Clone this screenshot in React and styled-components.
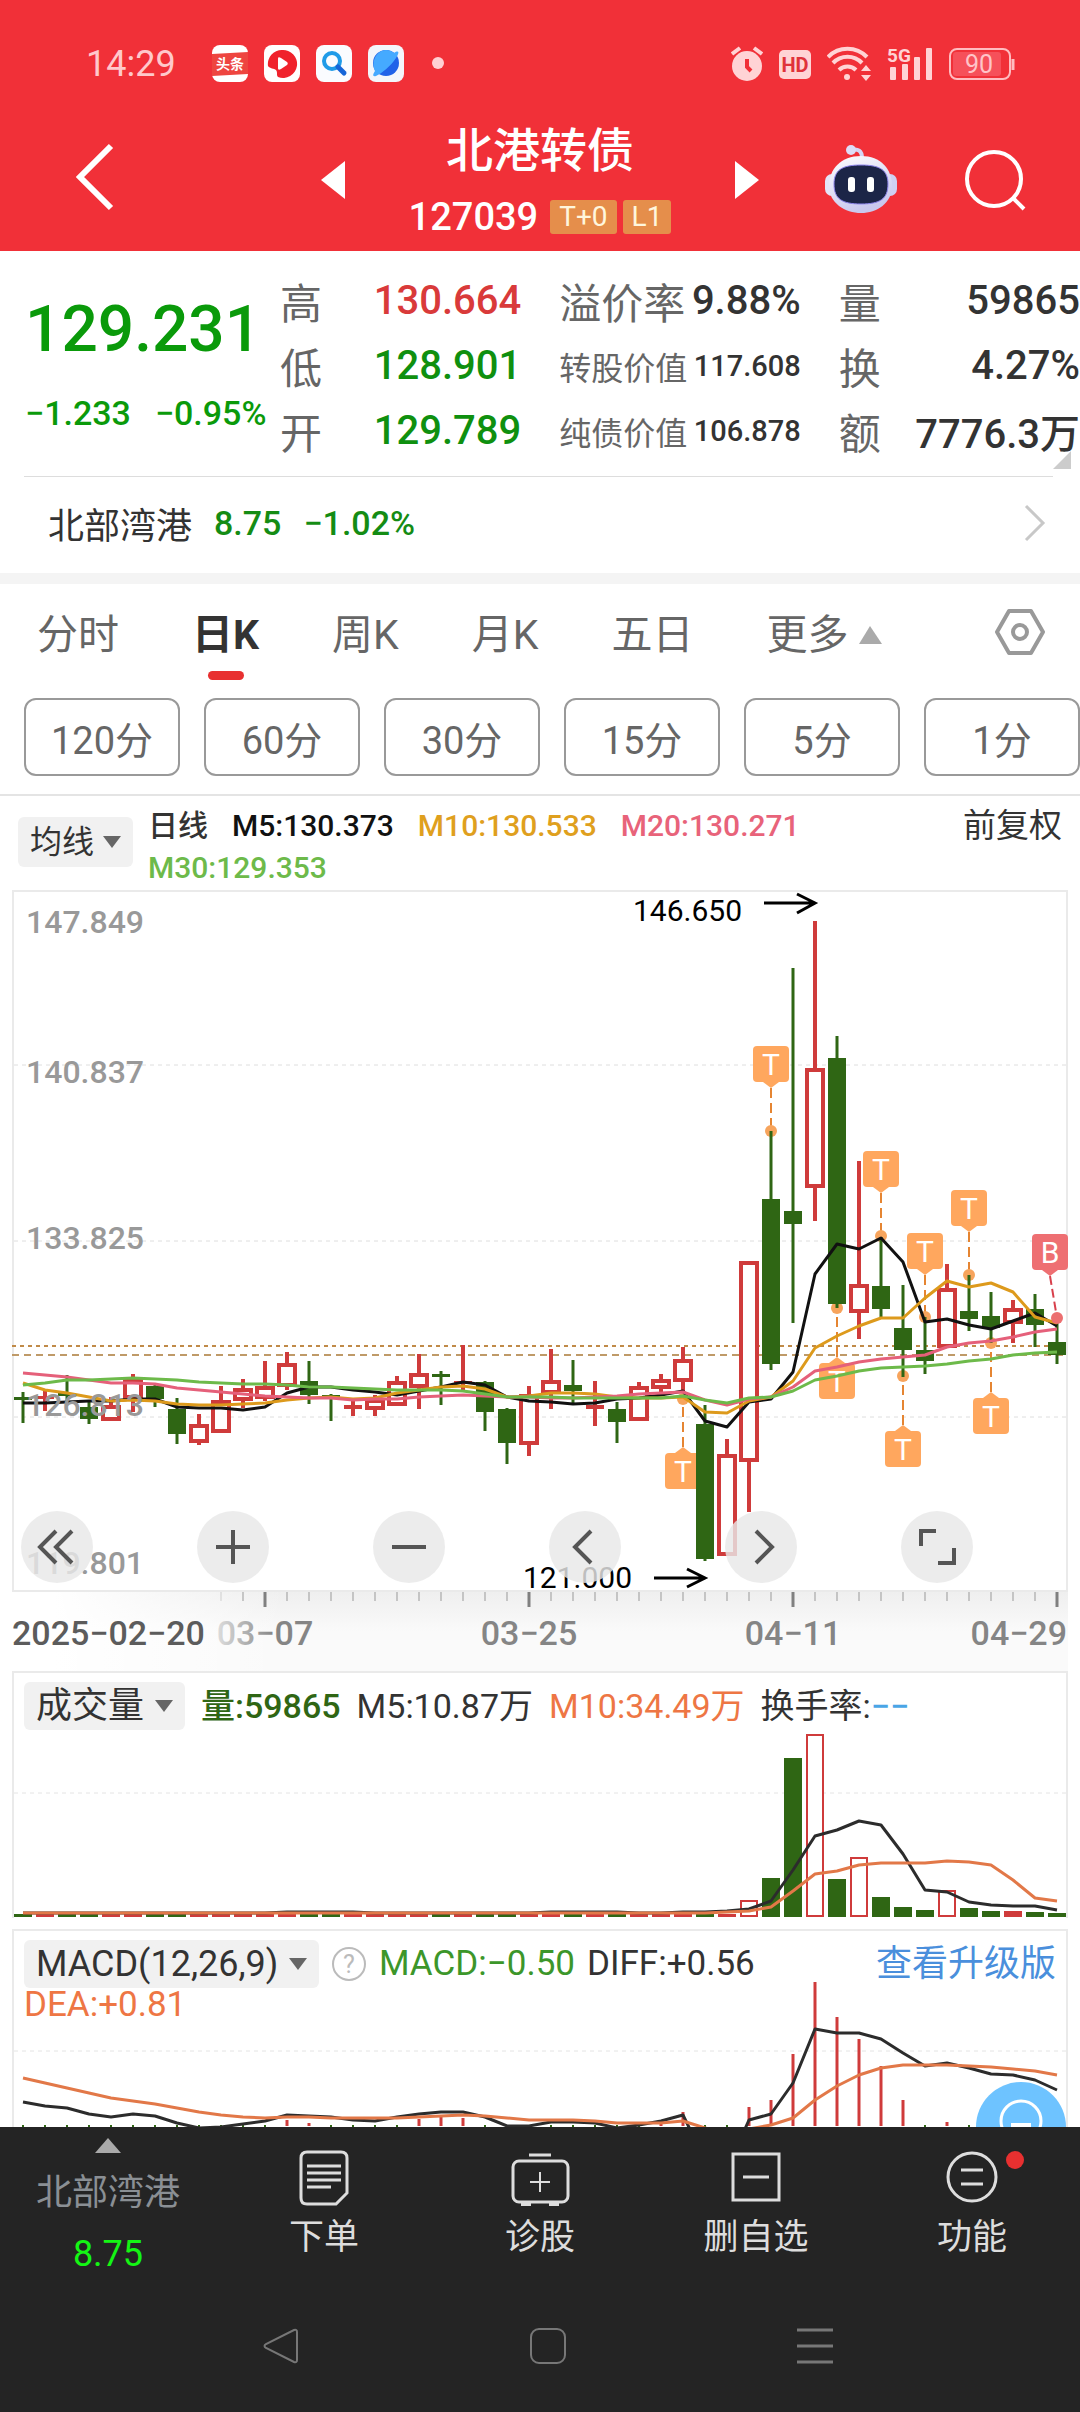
import React, { Component } from "react";

import styled, { createGlobalStyle } from "styled-components";

const GlobalStyle = createGlobalStyle`
  * {
    box-sizing: border-box;
  }
  body {
    margin: 0;
    background: #fff;
    color: #333;
    font-family: Roboto, "Noto Sans CJK SC", sans-serif;
  }
  button, select {
    font: inherit;
    color: inherit;
    background: none;
    border: 0;
    padding: 0;
    margin: 0;
  }
  a {
    color: inherit;
    text-decoration: none;
  }
  svg {
    display: block;
    flex-shrink: 0;
  }
  svg text {
    font-family: Roboto, "Noto Sans CJK SC", sans-serif;
  }
`

const RED = "#cf3b3b"
const GREEN = "#2f6614"
const ORANGE = "#e27848"

/* ---------- header ---------- */

const Header = styled.header`
  background: #f13038;
  color: #fff;
`
const StatusBar = styled.div`
  display: flex;
  justify-content: space-between;
  align-items: center;
  height: 92px;
  padding: 36px 64px 0 86px;
`
const StatusGroup = styled.div`
  display: flex;
  align-items: center;
  gap: 16px;
`
const Clock = styled.time`
  font-size: 36px;
  line-height: 44px;
  color: #ffc8cb;
  margin-right: 20px;
`
const TitleBar = styled.div`
  display: grid;
  grid-template-columns: 1fr 438px 1fr;
  align-items: center;
  padding: 29px 0 12px;
`
const BackButton = styled.button`
  margin-left: 76px;
  justify-self: start;
`
const TitleGroup = styled.div`
  display: flex;
  align-items: center;
  justify-content: space-between;
`
const Title = styled.h1`
  margin: 0;
  font-size: 47px;
  line-height: 60px;
  font-weight: 500;
  text-align: center;
`
const CodeRow = styled.div`
  display: flex;
  align-items: center;
  justify-content: center;
  gap: 6px;
  height: 44px;
  margin-top: 14px;
  font-size: 38px;
  font-weight: 500;
`
const Badge = styled.span`
  padding: 0 9px;
  margin-left: ${props => (props.$first ? "6px" : "0")};
  border-radius: 3px;
  background: #e58e4b;
  color: #fff6dd;
  font-size: 28px;
  line-height: 34px;
  font-weight: 400;
`
const HeaderActions = styled.div`
  display: flex;
  align-items: center;
  gap: 67px;
  padding-left: 65px;
`

/* ---------- quote ---------- */

const Quote = styled.section`
  display: flex;
  padding: 17px 0 13px;
`
const PriceBlock = styled.div`
  width: 280px;
  padding: 26px 0 0 25px;
  color: #0a9a0a;
  white-space: nowrap;
`
const Price = styled.div`
  font-size: 64px;
  line-height: 72px;
  font-weight: 500;
`
const Delta = styled.div`
  display: flex;
  gap: 24px;
  margin-top: 25px;
  font-size: 34px;
  line-height: 44px;
  font-weight: 500;
`
const Stats = styled.div`
  flex: 1;
  display: grid;
  grid-template-columns: repeat(3, 1fr);
  column-gap: 38px;
`
const StatColumn = styled.dl`
  margin: 0;
`
const Stat = styled.div`
  display: flex;
  align-items: center;
  justify-content: space-between;
  height: 65px;
  white-space: nowrap;
`
const StatLabel = styled.dt`
  font-size: ${props => (props.$small ? "32px" : "42px")};
  color: #666;
`
const StatValue = styled.dd`
  margin: 0;
  font-size: ${props => (props.$small ? "29px" : "40px")};
  font-weight: 500;
  color: ${props => props.$color || "#333"};
`
const Corner = styled.div`
  height: 1px;
  margin: 0 27px 0 24px;
  background: #ddd;
  position: relative;

  svg {
    position: absolute;
    right: -18px;
    bottom: 8px;
  }
`
const Related = styled.a`
  display: flex;
  align-items: center;
  height: 96px;
  padding: 0 34px 4px 48px;
  font-size: 36px;
`
const RelatedPrice = styled.span`
  margin-left: 22px;
  font-size: 34px;
  font-weight: 500;
  color: #148c14;
`
const RelatedArrow = styled.span`
  margin-left: auto;
`
const Band = styled.div`
  height: 11px;
  background: #f4f4f4;
`

/* ---------- tabs ---------- */

const Tabs = styled.nav`
  display: flex;
  gap: 73px;
  height: 96px;
  padding: 0 35px 0 37px;
`
const Tab = styled.button`
  display: flex;
  flex-direction: column;
  align-items: center;
  padding-top: 23px;
  font-size: 41px;
  line-height: 56px;
  white-space: nowrap;
  color: ${props => (props.$active ? "#333" : "#666")};
  font-weight: ${props => (props.$active ? 700 : 400)};

  &::after {
    content: "";
    width: 36px;
    height: 9px;
    margin-top: 8px;
    border-radius: 5px;
    background: ${props => (props.$active ? "#e83030" : "transparent")};
  }
`
const TabLabel = styled.span`
  display: flex;
  align-items: center;
  gap: 10px;
`
const SettingsButton = styled.button`
  margin-left: auto;
`
const Periods = styled.div`
  display: grid;
  grid-template-columns: repeat(6, 1fr);
  gap: 24px;
  padding: 18px 0 18px 24px;
  border-bottom: 2px solid #e4e4e4;
`
const Period = styled.button`
  height: 78px;
  border: 2px solid #999;
  border-radius: 12px;
  font-size: 38px;
  color: #666;
`

/* ---------- charts ---------- */

const Legend = styled.div`
  display: flex;
  align-items: flex-start;
  height: 94px;
  padding: 9px 18px 0;
  font-size: 33px;
  line-height: 42px;
`
const LegendItems = styled.div`
  flex: 1;
  display: flex;
  flex-wrap: wrap;
  column-gap: 24px;
  margin-left: 15px;
  font-size: 30px;
  font-weight: 500;
`
const Value = styled.span`
  color: ${props => props.$color};
  white-space: nowrap;
`
const Picker = styled.label`
  display: flex;
  align-items: center;
  gap: ${props => (props.$small ? "8px" : "10px")};
  flex-shrink: 0;
  height: ${props => (props.$small ? "50px" : "48px")};
  margin-top: ${props => (props.$small ? "12px" : "0")};
  padding: 0 12px;
  border-radius: 6px;
  background: #f1f1f1;

  select {
    appearance: none;
    outline: none;
    font-size: ${props => (props.$small ? "32px" : "36px")};
    line-height: 46px;
    color: #333;
  }
`
const ChartArea = styled.section`
  margin: 0 12px;
  position: relative;
`
const Canvas = styled.svg`
  width: 100%;
  height: auto;
  grid-area: 1 / 1;
`
const ChartButtons = styled.div`
  position: absolute;
  left: 9px;
  bottom: 9px;
  display: flex;
  gap: 104px;
`
const RoundButton = styled.button`
  width: 72px;
  height: 72px;
  border-radius: 50%;
  background: rgba(232, 232, 232, 0.82);
`
const DateAxis = styled.div`
  margin: 0 12px;
  background: linear-gradient(to right, #fff 4%, rgba(255, 255, 255, 0) 26%),
    linear-gradient(to bottom, #efefef, #fafafa 50%);
`
const Panel = styled.section`
  display: grid;
  margin: 0 12px ${props => (props.$last ? "0" : "11px")};
  position: relative;
  overflow: hidden;
`
const PanelHeader = styled.div`
  grid-area: 1 / 1;
  align-self: start;
  display: flex;
  flex-wrap: wrap;
  align-items: center;
  column-gap: ${props => props.$gap};
  padding: 11px 12px 0;
  font-size: ${props => props.$size};
  line-height: 34px;
  z-index: 1;
`
const Medium = styled.span`
  font-weight: ${props => props.$weight || 500};
  color: ${props => props.$color};
  white-space: nowrap;
`
const UpgradeLink = styled.a`
  margin-left: auto;
  font-size: 36px;
  color: #4a8fdc;
`
const ChatButton = styled.button`
  position: absolute;
  right: 2px;
  bottom: -45px;
  width: 90px;
  height: 90px;
  border-radius: 50%;
  background: #6ec3ff;
  z-index: 2;
`

/* ---------- bottom ---------- */

const BottomBar = styled.footer`
  background: #242424;
  color: #ddd;
`
const Actions = styled.div`
  display: grid;
  grid-template-columns: repeat(5, 1fr);
  height: 153px;
`
const Action = styled.button`
  display: flex;
  flex-direction: column;
  align-items: center;
  padding-top: 23px;
  font-size: 35px;
  line-height: 50px;
`
const ActionIcon = styled.span`
  position: relative;
  margin-bottom: 7px;
`
const Dot = styled.i`
  position: absolute;
  top: 1px;
  right: -26px;
  width: 18px;
  height: 18px;
  border-radius: 50%;
  background: #e83030;
`
const Ticker = styled(Action)`
  padding-top: 11px;
  color: #8a8f94;
  font-size: 36px;
  line-height: 46px;

  svg {
    margin-bottom: 17px;
  }
`
const TickerPrice = styled.span`
  margin-top: 15px;
  color: #14f514;
`
const SystemNav = styled.nav`
  display: flex;
  justify-content: center;
  align-items: center;
  gap: 231px;
  height: 132px;
  padding-left: 16px;
`

/* ---------- data, y grows downwards in chart units ---------- */

const STEP = 22
const xAt = i => 11 + i * STEP

// [up, high, body top, body bottom, low]
const candles = [
  [0, 502, 507, 509, 533], [1, 500, 506, 509, 521], [0, 485, 503, 505, 511], [0, 510, 517, 529, 534],
  [1, 507, 515, 530, 530], [1, 484, 489, 508, 522], [0, 494, 496, 509, 517], [0, 508, 519, 544, 554],
  [1, 524, 534, 552, 555], [1, 496, 510, 542, 542], [1, 489, 498, 510, 518], [1, 471, 496, 508, 511],
  [1, 462, 473, 496, 500], [0, 471, 491, 505, 514], [0, 504, 505, 507, 531], [1, 510, 515, 519, 526],
  [1, 505, 509, 519, 526], [1, 486, 491, 515, 515], [1, 464, 483, 497, 519], [0, 481, 484, 487, 515],
  [1, 455, 491, 493, 500], [0, 491, 492, 522, 541], [0, 518, 519, 553, 574], [1, 496, 504, 554, 566],
  [1, 459, 490, 503, 519], [0, 470, 495, 501, 513], [1, 491, 515, 519, 536], [0, 512, 519, 532, 553],
  [1, 492, 496, 530, 530], [1, 484, 489, 498, 503], [1, 457, 469, 491, 503], [0, 515, 534, 669, 671],
  [1, 549, 564, 665, 665], [1, 371, 371, 571, 622], [0, 241, 309, 474, 480], [0, 78, 321, 334, 433],
  [1, 31, 178, 297, 331], [0, 146, 168, 414, 418], [1, 271, 394, 422, 449], [0, 347, 396, 419, 427],
  [0, 395, 438, 460, 487], [0, 427, 460, 471, 484], [1, 374, 398, 457, 457], [0, 385, 421, 429, 441],
  [0, 402, 426, 438, 453], [1, 410, 418, 433, 453], [0, 404, 419, 435, 457], [0, 429, 452, 465, 474],
]

const averages = [
  {
    color: "#111",
    values: [513, 513, 512, 511, 511, 509, 509, 517, 518, 518, 520, 517, 503, 497, 497, 500, 502, 505, 501, 497, 492, 495, 507, 511, 512, 514, 513, 509, 508, 505, 501, 531, 537, 512, 509, 482, 384, 354, 359, 348, 372, 432, 429, 435, 439, 431, 423, 436],
  },
  {
    color: "#dd9a1c",
    values: [493, 500, 503, 507, 511, 510, 511, 514, 515, 515, 514, 513, 510, 508, 507, 509, 508, 503, 500, 497, 496, 499, 507, 506, 503, 503, 504, 507, 508, 508, 507, 522, 523, 511, 507, 491, 458, 446, 436, 428, 428, 408, 391, 397, 393, 402, 427, 433],
  },
  {
    color: "#e5607a",
    values: [483, 485, 487, 490, 493, 493, 494, 498, 500, 502, 504, 506, 507, 508, 508, 510, 509, 509, 507, 506, 505, 506, 507, 507, 508, 508, 507, 506, 504, 503, 502, 510, 515, 509, 507, 497, 481, 477, 472, 469, 467, 465, 457, 453, 451, 447, 442, 439],
  },
  {
    color: "#6dba4a",
    values: [495, 493, 490, 490, 489, 488, 489, 490, 492, 493, 494, 494, 495, 497, 497, 498, 499, 500, 500, 500, 501, 504, 507, 507, 507, 508, 508, 508, 508, 508, 506, 510, 513, 508, 507, 501, 490, 486, 481, 478, 477, 476, 474, 471, 469, 465, 463, 462],
  },
]

// [candle index, top of the flag, dot]
const trades = [
  [30, 563, 509], [34, 156, 241], [37, 473, 418], [39, 261, 346],
  [40, 541, 486], [41, 343, 427], [43, 300, 385], [44, 508, 453],
]

const priceLabels = [["147.849", 43], ["140.837", 193], ["133.825", 359], ["126.813", 526], ["119.801", 684]]

const volumeTops = { 30: 240, 33: 230, 34: 207, 35: 87, 36: 64, 37: 208, 38: 187, 39: 226, 40: 236, 41: 239, 42: 220, 43: 237, 44: 240, 45: 240, 46: 241, 47: 242 }
const volumeM5 = [...Array(12).fill(242), 241, 241, 241, 241, ...Array(8).fill(242), 241, 241, 241, 241, 242, 242, 241, 241, 240, 238, 230, 199, 165, 159, 150, 154, 183, 219, 221, 231, 234, 235, 235, 239]
const volumeM10 = [...Array(32).fill(242), 241, 240, 236, 220, 203, 200, 194, 192, 192, 192, 190, 191, 194, 209, 227, 230]

const macdBars = { 12: 191, 13: 194, 18: 190, 19: 188, 20: 189, 29: 194, 30: 183, 33: 178, 34: 171, 35: 125, 36: 53, 37: 88, 38: 110, 39: 137, 40: 171, 42: 193 }
const diff = [173, 177, 179, 185, 188, 185, 187, 194, 199, 198, 195, 192, 186, 187, 188, 191, 192, 188, 185, 183, 183, 188, 197, 197, 193, 193, 194, 199, 196, 192, 186, 231, 240, 191, 185, 154, 100, 104, 104, 110, 124, 137, 134, 139, 145, 146, 151, 161]
const dea = [149, 154, 159, 164, 169, 172, 175, 179, 183, 186, 188, 189, 188, 188, 189, 189, 189, 189, 188, 187, 186, 187, 189, 191, 191, 191, 192, 194, 194, 194, 192, 199, 204, 200, 196, 189, 171, 157, 146, 139, 136, 136, 136, 137, 138, 140, 142, 146]

const stats = [
  [
    { label: "高", value: "130.664", color: "#d93a3a" },
    { label: "低", value: "128.901", color: "#0f900f" },
    { label: "开", value: "129.789", color: "#0f900f" },
  ],
  [
    { label: "溢价率", value: "9.88%" },
    { label: "转股价值", value: "117.608", small: true },
    { label: "纯债价值", value: "106.878", small: true },
  ],
  [
    { label: "量", value: "59865" },
    { label: "换", value: "4.27%" },
    { label: "额", value: "7776.3万" },
  ],
]

const tabs = ["分时", "日K", "周K", "月K", "五日", "更多"]
const periods = ["120分", "60分", "30分", "15分", "5分", "1分"]

/* ---------- drawings ---------- */

const Line = ({ values, color, width = 3 }) => (
  <polyline
    points={values.map((y, i) => `${xAt(i)},${y}`).join(" ")}
    fill="none"
    stroke={color}
    strokeWidth={width}
    strokeLinejoin="round"
  />
)

const Caret = ({ color = "#666" }) => (
  <svg width="18" height="14" viewBox="0 0 18 14"><path d="M0 1h18L9 13z" fill={color} /></svg>
)

const Candle = ({ index, data }) => {
  const [up, high, top, bottom, low] = data
  const x = xAt(index)
  const color = up ? RED : GREEN
  if (up && bottom - top > 6)
    return (
      <g stroke={color}>
        <path d={`M${x} ${high}V${top}M${x} ${bottom}V${low}`} strokeWidth="4" />
        <rect x={x - 8} y={top + 2} width="16" height={bottom - top - 3} fill="#fff" strokeWidth="4" />
      </g>
    )
  return (
    <g>
      <path d={`M${x} ${high}V${low}`} stroke={color} strokeWidth={up ? 4 : 3} />
      <rect x={x - 9} y={top} width="18" height={Math.max(bottom - top, 3)} fill={color} />
    </g>
  )
}

const Trade = ({ index, top, dot }) => {
  const x = xAt(index)
  const above = top < dot
  const edge = above ? top + 36 : top
  const tip = above ? edge + 6 : edge - 6
  return (
    <g>
      <path d={`M${x} ${tip}V${dot}`} stroke="#e58532" strokeWidth="2" strokeDasharray="10 5" />
      <circle cx={x} cy={dot} r="6" fill="#f7a45c" />
      <rect x={x - 18} y={top} width="36" height="36" rx="4" fill="#ffa75e" />
      <path d={`M${x - 8} ${edge}L${x} ${tip}L${x + 8} ${edge}z`} fill="#ffa75e" />
      <text x={x} y={top + 29} textAnchor="middle" fontSize="30" fill="#fff">T</text>
    </g>
  )
}

const PriceChart = () => (
  <Canvas viewBox="0 0 1056 702" role="img" aria-label="日K线">
    <rect x="1" y="1" width="1054" height="700" fill="none" stroke="#eaeaea" strokeWidth="2" />
    <path d="M2 175H1054M2 351H1054M2 527H1054" stroke="#dedede" strokeWidth="1" strokeDasharray="4 4" />
    <path d="M0 456H1054" stroke="#c08a48" strokeWidth="2" strokeDasharray="4 4" />
    <path d="M0 465H1054" stroke="#bf9a68" strokeWidth="2" strokeDasharray="7 5" />
    {trades.map(([index, top, dot]) => <Trade key={index} index={index} top={top} dot={dot} />)}
    {candles.map((data, i) => <Candle key={i} index={i} data={data} />)}
    {averages.map(a => <Line key={a.color} {...a} />)}
    <path d="M1038 386L1045 428" stroke="#d8404c" strokeWidth="2" strokeDasharray="9 4" />
    <circle cx="1045" cy="428" r="6" fill="#ec6f70" />
    <rect x="1020" y="344" width="36" height="36" rx="4" fill="#ee6f72" />
    <path d="M1030 380L1038 386L1046 380z" fill="#ee6f72" />
    <text x="1038" y="373" textAnchor="middle" fontSize="30" fill="#fff">B</text>
    <g fontSize="32" fontWeight="500" fill="#999">
      {priceLabels.map(([label, y]) => <text key={label} x="14" y={y}>{label}</text>)}
    </g>
    <g fontSize="30" fill="#000">
      <text x="621" y="31">146.650</text>
      <text x="511" y="698">121.000</text>
    </g>
    <path d="M752 13H802M785 4L803 13L785 23M642 688H692M675 679L693 688L675 697" fill="none" stroke="#000" strokeWidth="3" />
  </Canvas>
)

const Axis = () => (
  <Canvas viewBox="0 0 1056 79" role="img" aria-label="日期">
    {candles.map((_, i) => {
      if (i < 9) return null
      const major = i % 12 === 11
      return (
        <path
          key={i}
          d={`M${xAt(i)} 0v${major ? 15 : 9}`}
          stroke={major ? "#808080" : "#999"}
          strokeWidth={major ? 3 : 1}
          opacity={i === 9 ? 0.4 : 1}
        />
      )
    })}
    <defs>
      <linearGradient id="fade">
        <stop offset="0" stopColor="#ddd" />
        <stop offset="0.6" stopColor="#858585" />
      </linearGradient>
    </defs>
    <g fontSize="34" fontWeight="500" fill="#858585">
      <text x="0" y="53" fill="#5c5c5c">2025−02−20</text>
      <text x="253" y="53" textAnchor="middle" fill="url(#fade)">03−07</text>
      <text x="517" y="53" textAnchor="middle">03−25</text>
      <text x="781" y="53" textAnchor="middle">04−11</text>
      <text x="1055" y="53" textAnchor="end">04−29</text>
    </g>
  </Canvas>
)

const VolumeChart = () => (
  <Canvas viewBox="0 0 1056 247" role="img" aria-label="成交量">
    <path d="M1 247V1H1055V247" fill="none" stroke="#eaeaea" strokeWidth="2" />
    <path d="M2 122H1054" stroke="#e4e4e4" strokeDasharray="4 4" />
    {candles.map(([up], i) => {
      const top = volumeTops[i] || 243
      if (up && top < 238)
        return <rect key={i} x={xAt(i) - 8} y={top} width="16" height={245 - top} fill="#fff" stroke={RED} strokeWidth="2" />
      return <rect key={i} x={xAt(i) - 9} y={top} width="18" height={246 - top} fill={up ? RED : GREEN} />
    })}
    <Line values={volumeM5} color="#2c2c2c" />
    <Line values={volumeM10} color={ORANGE} />
  </Canvas>
)

const MacdChart = () => (
  <Canvas viewBox="0 0 1056 198" role="img" aria-label="MACD">
    <path d="M1 198V1H1055V198" fill="none" stroke="#eaeaea" strokeWidth="2" />
    <path d="M2 122H1054" stroke="#e4e4e4" strokeDasharray="4 4" />
    {candles.map((_, i) => (
      macdBars[i]
        ? <path key={i} d={`M${xAt(i)} ${macdBars[i]}V197`} stroke={RED} strokeWidth="3" />
        : <path key={i} d={`M${xAt(i)} 196V198`} stroke={GREEN} strokeWidth="2" />
    ))}
    <Line values={diff} color="#2c2c2c" />
    <Line values={dea} color={ORANGE} />
  </Canvas>
)

const AppIcons = () => (
  <>
    <svg width="36" height="38" viewBox="0 0 36 38">
      <rect width="36" height="37" rx="8" fill="#fff" />
      <path d="M0 9L36 7V29L0 31z" fill="#ee4540" />
      <text x="18" y="24" textAnchor="middle" fontSize="14" fontWeight="700" fill="#fff">头条</text>
    </svg>
    <svg width="36" height="38" viewBox="0 0 36 38">
      <rect width="36" height="37" rx="8" fill="#fff" />
      <path d="M18 5a14 14 0 1 1-4 27c-2-2 0-4-2-7-2-2-6-1-8-4A14 14 0 0 1 18 5z" fill="#f0222c" />
      <path d="M14 14c0-2 1-2 3-1l6 4c1 1 1 2 0 3l-6 4c-2 1-3 1-3-1z" fill="#fff" />
    </svg>
    <svg width="36" height="38" viewBox="0 0 36 38">
      <rect width="36" height="37" rx="8" fill="#fafcff" />
      <circle cx="16" cy="16" r="8" fill="none" stroke="#1f9be8" strokeWidth="4" />
      <path d="M22 22L28 28" stroke="#1565d8" strokeWidth="5" strokeLinecap="round" />
    </svg>
    <svg width="36" height="38" viewBox="0 0 36 38">
      <rect width="36" height="37" rx="8" fill="#f3f6fb" />
      <circle cx="18" cy="18" r="13" fill="#2062e8" />
      <path d="M26 8C32 4 31 9 28 13C22 22 14 28 8 31C4 32 5 29 7 26C3 18 7 6 18 5C21 5 24 6 26 8z" fill="#45aaff" />
    </svg>
    <svg width="50" height="38" viewBox="0 0 50 38"><circle cx="18" cy="18" r="6" fill="#ffd0d3" /></svg>
  </>
)

const DeviceIcons = () => (
  <>
    <svg width="32" height="38" viewBox="0 0 32 38" fill="#ffd3d5">
      <circle cx="16" cy="21" r="15" />
      <path d="M1 9L9 3M31 9L23 3" stroke="#ffd3d5" strokeWidth="4" />
      <path d="M16 14V22L20 26" fill="none" stroke="#f13038" strokeWidth="4" />
    </svg>
    <svg width="32" height="38" viewBox="0 0 32 38">
      <rect y="5" width="32" height="29" rx="5" fill="#ffd3d5" />
      <text x="16" y="27" textAnchor="middle" fontSize="20" fontWeight="700" fill="#e0323a">HD</text>
    </svg>
    <svg width="44" height="38" viewBox="0 0 44 38" fill="none" stroke="#ffd3d5" strokeWidth="4">
      <path d="M1 12A27 27 0 0 1 40 12M6 18A20 20 0 0 1 35 18M12 25A12 12 0 0 1 29 25" />
      <circle cx="20" cy="32" r="3" fill="#ffd3d5" stroke="none" />
      <path d="M34 26L39 20L44 26zM34 30L39 36L44 30z" fill="#ffd3d5" stroke="none" />
    </svg>
    <svg width="45" height="38" viewBox="0 0 45 38" fill="#ffd3d5">
      <text x="0" y="17" fontSize="19" fontWeight="700">5G</text>
      <rect x="3" y="22" width="6" height="13" rx="1" />
      <rect x="15" y="19" width="6" height="16" rx="1" />
      <rect x="27" y="12" width="6" height="23" rx="1" />
      <rect x="39" y="3" width="6" height="32" rx="1" />
    </svg>
    <svg width="68" height="38" viewBox="0 0 68 38">
      <rect x="2" y="4" width="60" height="30" rx="7" fill="none" stroke="#ffbcc0" strokeWidth="2" />
      <rect x="5" y="7" width="48" height="24" rx="3" fill="#f6505a" />
      <path d="M65 14V25" stroke="#ffbcc0" strokeWidth="3" />
      <text x="31" y="28" textAnchor="middle" fontSize="25" fill="#ffc4c8">90</text>
    </svg>
  </>
)

const Robot = () => (
  <svg width="74" height="70" viewBox="0 0 74 70">
    <defs>
      <linearGradient id="shell" x1="0" y1="0" x2="0.4" y2="1">
        <stop offset="0" stopColor="#fff" />
        <stop offset="1" stopColor="#c9c8ee" />
      </linearGradient>
    </defs>
    <rect x="1" y="29" width="14" height="22" rx="7" fill="#e4e4f8" />
    <rect x="59" y="29" width="14" height="22" rx="7" fill="#cfd0f2" />
    <path d="M27 5C34 3 38 6 38 13" fill="none" stroke="#d6d5f5" strokeWidth="4" />
    <circle cx="27" cy="5" r="5" fill="#dddcf7" />
    <path d="M37 11C57 11 68 24 68 41C68 58 53 68 37 68C21 68 5 58 5 41C5 24 17 11 37 11z" fill="url(#shell)" />
    <path d="M37 20C56 20 64 25 64 39C64 54 56 59 37 59C18 59 10 54 10 39C10 25 18 20 37 20z" fill="#1c2547" stroke="#8f86ee" strokeWidth="1" />
    <rect x="24" y="32" width="7" height="15" rx="3" fill="#fff" />
    <rect x="43" y="32" width="7" height="15" rx="3" fill="#fff" />
  </svg>
)

export default class App extends Component {

  constructor(props) {
    super(props)
    this.state = {
      tab: "日K",
    }
  }

  handleTabClick = tab => {
    this.setState({ tab: tab })
  }

  render() {

    return (
      <>
        <GlobalStyle />
        <Header>
          <StatusBar>
            <StatusGroup>
              <Clock>14:29</Clock>
              <AppIcons />
            </StatusGroup>
            <StatusGroup>
              <DeviceIcons />
            </StatusGroup>
          </StatusBar>
          <TitleBar>
            <BackButton aria-label="返回">
              <svg width="38" height="74" viewBox="0 0 38 74"><path d="M35 3L4 34L35 65" fill="none" stroke="#fff" strokeWidth="6" /></svg>
            </BackButton>
            <TitleGroup>
              <button aria-label="上一只">
                <svg width="24" height="38" viewBox="0 0 24 38"><path d="M24 0V38L0 19z" fill="#fff" /></svg>
              </button>
              <div>
                <Title>北港转债</Title>
                <CodeRow>
                  127039
                  <Badge $first>T+0</Badge>
                  <Badge>L1</Badge>
                </CodeRow>
              </div>
              <button aria-label="下一只">
                <svg width="24" height="38" viewBox="0 0 24 38"><path d="M0 0V38L24 19z" fill="#fff" /></svg>
              </button>
            </TitleGroup>
            <HeaderActions>
              <button aria-label="助手"><Robot /></button>
              <button aria-label="搜索">
                <svg width="62" height="64" viewBox="0 0 62 64" fill="none" stroke="#fff" strokeWidth="4">
                  <circle cx="29" cy="31" r="27" />
                  <path d="M48 50L59 61" />
                </svg>
              </button>
            </HeaderActions>
          </TitleBar>
        </Header>

        <Quote>
          <PriceBlock>
            <Price>129.231</Price>
            <Delta><span>−1.233</span><span>−0.95%</span></Delta>
          </PriceBlock>
          <Stats>
            {stats.map((column, i) => (
              <StatColumn key={i}>
                {column.map(s => (
                  <Stat key={s.label}>
                    <StatLabel $small={s.small}>{s.label}</StatLabel>
                    <StatValue $small={s.small} $color={s.color}>{s.value}</StatValue>
                  </Stat>
                ))}
              </StatColumn>
            ))}
          </Stats>
        </Quote>
        <Corner>
          <svg width="18" height="18" viewBox="0 0 18 18"><path d="M18 0V18H0z" fill="#ccc" /></svg>
        </Corner>
        <Related href="#related">
          北部湾港
          <RelatedPrice>8.75</RelatedPrice>
          <RelatedPrice>−1.02%</RelatedPrice>
          <RelatedArrow>
            <svg width="22" height="38" viewBox="0 0 22 38"><path d="M2 2L19 19L2 36" fill="none" stroke="#c8c8c8" strokeWidth="3" /></svg>
          </RelatedArrow>
        </Related>
        <Band />

        <Tabs>
          {tabs.map(tab => (
            <Tab key={tab} $active={tab === this.state.tab} onClick={() => this.handleTabClick(tab)}>
              <TabLabel>
                {tab}
                {tab === "更多" && <svg width="23" height="18" viewBox="0 0 23 18"><path d="M0 18H23L11 0z" fill="#aaa" /></svg>}
              </TabLabel>
            </Tab>
          ))}
          <SettingsButton aria-label="设置">
            <svg width="50" height="46" viewBox="0 0 50 46" fill="none" stroke="#999" strokeWidth="4" strokeLinejoin="round">
              <path d="M14 2H36L48 23L36 44H14L2 23z" />
              <circle cx="25" cy="23" r="7" />
            </svg>
          </SettingsButton>
        </Tabs>
        <Periods>
          {periods.map(period => <Period key={period}>{period}</Period>)}
        </Periods>

        <Legend>
          <Picker $small>
            <select aria-label="指标"><option>均线</option></select>
            <Caret />
          </Picker>
          <LegendItems>
            <Value $color="#333">日线</Value>
            <Value $color="#111">M5:130.373</Value>
            <Value $color="#dfa01e">M10:130.533</Value>
            <Value $color="#e8637a">M20:130.271</Value>
            <Value $color="#6dba4a">M30:129.353</Value>
          </LegendItems>
          前复权
        </Legend>
        <ChartArea>
          <PriceChart />
          <ChartButtons>
            <RoundButton aria-label="最左">
              <svg width="72" height="72" viewBox="0 0 72 72" fill="none" stroke="#555" strokeWidth="4"><path d="M35 20L19 36L35 52M51 20L35 36L51 52" /></svg>
            </RoundButton>
            <RoundButton aria-label="放大">
              <svg width="72" height="72" viewBox="0 0 72 72" fill="none" stroke="#555" strokeWidth="4"><path d="M19 36H53M36 19V53" /></svg>
            </RoundButton>
            <RoundButton aria-label="缩小">
              <svg width="72" height="72" viewBox="0 0 72 72" fill="none" stroke="#555" strokeWidth="4"><path d="M19 36H53" /></svg>
            </RoundButton>
            <RoundButton aria-label="左移">
              <svg width="72" height="72" viewBox="0 0 72 72" fill="none" stroke="#555" strokeWidth="4"><path d="M42 20L26 36L42 52" /></svg>
            </RoundButton>
            <RoundButton aria-label="右移">
              <svg width="72" height="72" viewBox="0 0 72 72" fill="none" stroke="#555" strokeWidth="4"><path d="M31 20L47 36L31 52" /></svg>
            </RoundButton>
            <RoundButton aria-label="全屏">
              <svg width="72" height="72" viewBox="0 0 72 72" fill="none" stroke="#555" strokeWidth="4"><path d="M20 35V20H35M53 37V52H37" /></svg>
            </RoundButton>
          </ChartButtons>
        </ChartArea>
        <DateAxis><Axis /></DateAxis>

        <Panel>
          <VolumeChart />
          <PanelHeader $gap="16px" $size="34px">
            <Picker>
              <select aria-label="副图指标"><option>成交量</option></select>
              <Caret />
            </Picker>
            <Medium $color={GREEN}>量:59865</Medium>
            <Medium $color="#333" $weight={400}>M5:10.87万</Medium>
            <Medium $color="#ee7644" $weight={400}>M10:34.49万</Medium>
            <Medium $color="#333" $weight={400}>换手率:<Medium $color="#4aa5e6">−−</Medium></Medium>
          </PanelHeader>
        </Panel>

        <Panel $last>
          <MacdChart />
          <PanelHeader $gap="12px" $size="35px">
            <Picker>
              <select aria-label="副图指标"><option>MACD(12,26,9)</option></select>
              <Caret />
            </Picker>
            <button aria-label="说明">
              <svg width="36" height="36" viewBox="0 0 36 36">
                <circle cx="18" cy="18" r="16" fill="none" stroke="#bbb" strokeWidth="2" />
                <text x="18" y="27" textAnchor="middle" fontSize="25" fill="#bbb">?</text>
              </svg>
            </button>
            <Medium $color="#3c962a" $weight={400}>MACD:−0.50</Medium>
            <Medium $color="#333" $weight={400}>DIFF:+0.56</Medium>
            <UpgradeLink href="#upgrade">查看升级版</UpgradeLink>
            <Medium $color="#ee7644" $weight={400}>DEA:+0.81</Medium>
          </PanelHeader>
          <ChatButton aria-label="客服">
            <svg width="90" height="90" viewBox="0 0 90 90" fill="none" stroke="#fff" strokeWidth="3">
              <circle cx="45" cy="39" r="20" />
              <path d="M35 43H55" strokeWidth="4" />
            </svg>
          </ChatButton>
        </Panel>

        <BottomBar>
          <Actions>
            <Ticker>
              <svg width="26" height="15" viewBox="0 0 26 15"><path d="M0 15H26L13 0z" fill="#aaa" /></svg>
              北部湾港
              <TickerPrice>8.75</TickerPrice>
            </Ticker>
            <Action>
              <ActionIcon>
                <svg width="50" height="56" viewBox="0 0 50 56" fill="none" stroke="#ddd" strokeWidth="3">
                  <path d="M8 2H42Q48 2 48 8V43L37 54H8Q2 54 2 48V8Q2 2 8 2z" />
                  <path d="M8 16H42M8 23H42M8 30H42M8 37H32" />
                </svg>
              </ActionIcon>
              下单
            </Action>
            <Action>
              <ActionIcon>
                <svg width="60" height="56" viewBox="0 0 60 56" fill="none" stroke="#ddd" strokeWidth="3">
                  <path d="M19 5H41" />
                  <rect x="3" y="11" width="55" height="41" rx="6" />
                  <path d="M20 32H40M30 22V42" strokeWidth="2" />
                  <path d="M11 54H21M39 54H49" strokeWidth="4" />
                </svg>
              </ActionIcon>
              诊股
            </Action>
            <Action>
              <ActionIcon>
                <svg width="50" height="56" viewBox="0 0 50 56" fill="none" stroke="#ddd" strokeWidth="3">
                  <rect x="2" y="4" width="46" height="46" />
                  <path d="M12 27H38" />
                </svg>
              </ActionIcon>
              删自选
            </Action>
            <Action>
              <ActionIcon>
                <svg width="52" height="56" viewBox="0 0 52 56" fill="none" stroke="#ddd" strokeWidth="3">
                  <circle cx="26" cy="27" r="24" />
                  <path d="M15 20H37M15 34H37" />
                </svg>
                <Dot />
              </ActionIcon>
              功能
            </Action>
          </Actions>
          <SystemNav>
            <button aria-label="后退">
              <svg width="36" height="36" viewBox="0 0 36 36"><path d="M31 2Q34 1 34 4V32Q34 35 31 34L3 20Q0 18 3 16z" fill="none" stroke="#777" strokeWidth="2" /></svg>
            </button>
            <button aria-label="主屏幕">
              <svg width="36" height="36" viewBox="0 0 36 36"><rect x="1" y="1" width="34" height="34" rx="8" fill="none" stroke="#777" strokeWidth="2" /></svg>
            </button>
            <button aria-label="最近任务">
              <svg width="36" height="36" viewBox="0 0 36 36"><path d="M0 2H36M0 18H36M0 34H36" stroke="#777" strokeWidth="3" /></svg>
            </button>
          </SystemNav>
        </BottomBar>
      </>
    )
  }
}
